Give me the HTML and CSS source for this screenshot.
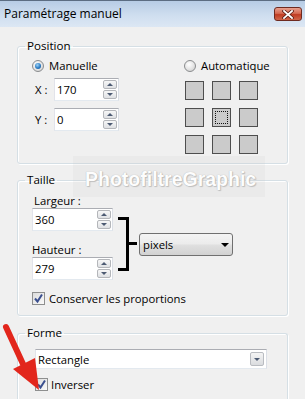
FILE: index.html
```html
<!DOCTYPE html>
<html lang="fr">
<head>
<meta charset="utf-8">
<title>Paramétrage manuel</title>
<link rel="stylesheet" href="styles.css">
</head>
<body>
<div class="titlebar">
  <span class="title">Paramétrage manuel</span>
  <span class="close">
    <svg width="12" height="9" viewBox="0 0 12 9"><path d="M2 1 L10 8 M10 1 L2 8" stroke="#5a1d14" stroke-width="3.4" stroke-linecap="square"/><path d="M2 1 L10 8 M10 1 L2 8" stroke="#fff" stroke-width="1.8" stroke-linecap="square"/></svg>
  </span>
</div>
<div class="content">
  <fieldset class="group group-pos">
    <legend>Position</legend>
    <div class="pos-body">
      <div class="pos-left">
        <div class="option-row"><span class="radio radio-on"><span class="dot"></span></span><span>Manuelle</span></div>
        <div class="axis-row">
          <span class="axis">X :</span>
          <div class="spin-input spin-xy"><span class="val">170</span><span class="spins"><span class="sb sb-up"></span><span class="sb sb-down"></span></span></div>
        </div>
        <div class="axis-row axis-row-y">
          <span class="axis">Y :</span>
          <div class="spin-input spin-xy"><span class="val">0</span><span class="spins"><span class="sb sb-up"></span><span class="sb sb-down"></span></span></div>
        </div>
      </div>
      <div class="pos-right">
        <div class="option-row"><span class="radio"></span><span>Automatique</span></div>
        <div class="anchor-grid">
          <span class="cell"></span><span class="cell"></span><span class="cell"></span>
          <span class="cell"></span><span class="cell cell-sel"><span class="focus"></span></span><span class="cell"></span>
          <span class="cell"></span><span class="cell"></span><span class="cell"></span>
        </div>
      </div>
    </div>
  </fieldset>

  <fieldset class="group group-size">
    <legend>Taille</legend>
    <div class="size-body">
      <div class="size-fields">
        <div class="size-label size-label-w">Largeur :</div>
        <div class="spin-input spin-size"><span class="val">360</span><span class="spins"><span class="sb sb-up"></span><span class="sb sb-down"></span></span></div>
        <div class="size-label size-label-h">Hauteur :</div>
        <div class="spin-input spin-size"><span class="val">279</span><span class="spins"><span class="sb sb-up"></span><span class="sb sb-down"></span></span></div>
      </div>
      <svg class="bracket" width="20" height="54" viewBox="0 0 20 54"><path d="M0 1.5 H9.5 V52.5 H0 M9.5 26.5 H19" fill="none" stroke="#000" stroke-width="3"/></svg>
      <div class="unit-select"><span>pixels</span><span class="caret"></span></div>
    </div>
    <div class="check-row check-keep"><span class="checkbox"><svg width="11" height="11" viewBox="0 0 11 11"><path d="M2 5.5 L4.5 8.5 L9 1.5" fill="none" stroke="#3a4f8f" stroke-width="2"/></svg></span><span>Conserver les proportions</span></div>
  </fieldset>

  <fieldset class="group group-shape">
    <legend>Forme</legend>
    <div class="combo"><span>Rectangle</span><span class="combo-btn"><span class="combo-caret"></span></span></div>
    <div class="check-row check-inv"><span class="checkbox"><svg width="11" height="11" viewBox="0 0 11 11"><path d="M2 5.5 L4.5 8.5 L9 1.5" fill="none" stroke="#3a4f8f" stroke-width="2"/></svg></span><span>Inverser</span></div>
  </fieldset>
</div>

<div class="watermark">PhotofiltreGraphic</div>
<svg class="red-arrow" width="50" height="76" viewBox="0 0 50 76"><path d="M6 5 L23 42" stroke="#e2261c" stroke-width="6" stroke-linecap="round"/><polygon points="13,47 35,36 39,68" fill="#e2261c"/></svg>
</body>
</html>
```
FILE: styles.css
```css
* { box-sizing: border-box; }
html, body { margin: 0; padding: 0; }
body {
  width: 305px;
  height: 399px;
  overflow: hidden;
  position: relative;
  background: #f0f0f0;
  font-family: "Open Sans", "Noto Sans", sans-serif;
  font-size: 11.3px;
  color: #000;
}

.titlebar {
  height: 27px;
  display: flex;
  justify-content: space-between;
  align-items: flex-start;
  padding: 0 3px 0 4px;
  border-top: 1px solid #5c6d82;
  background: linear-gradient(#b7cce5, #cfdeef 55%, #dce7f4);
}
.title { font-size: 12px; line-height: 16px; margin-top: 5px; color: #000; }
.close {
  margin-top: 6px;
  width: 28px;
  height: 14px;
  border: 1px solid #6e2a20;
  border-radius: 3px;
  background: linear-gradient(#e8a08f, #d56a52 45%, #c03c22 55%, #d0664a);
  display: flex;
  align-items: center;
  justify-content: center;
}

.content { padding: 11px 17px 0 17px; }

.group {
  margin: 0;
  padding: 0;
  min-width: 0;
  border: 1px solid #d5dfe5;
  border-radius: 3px;
  box-shadow: inset 1px 1px 0 #fff, 1px 1px 0 #fff;
}
.group legend {
  margin-left: 7px;
  padding: 0 2px;
  line-height: 16px;
  font-size: 11.6px;
}
.group-size { margin-top: 8px; }
.group-shape {
  margin-top: 9px;
  padding-bottom: 7px;
  border-bottom-width: 0;
  border-bottom-left-radius: 0;
  border-bottom-right-radius: 0;
}

/* Position */
.pos-body {
  display: grid;
  grid-template-columns: 151px auto;
  padding: 4px 0 9px 14px;
}
.option-row {
  display: flex;
  align-items: center;
  gap: 5px;
  height: 16px;
  line-height: 16px;
}
.radio {
  width: 12px;
  height: 12px;
  border-radius: 50%;
  border: 1px solid #8a8c8e;
  background: radial-gradient(circle at 40% 35%, #ffffff 0%, #e6e6e6 50%, #c9c9c9 100%);
  display: flex;
  align-items: center;
  justify-content: center;
}
.radio-on .dot {
  width: 6px;
  height: 6px;
  border-radius: 50%;
  background: radial-gradient(circle at 40% 35%, #9fd3f5, #2a7bc4 55%, #164d86);
}
.pos-right .option-row { margin-left: 1px; }

.axis-row { display: flex; align-items: center; margin-top: 4px; }
.axis-row-y { margin-top: 7px; }
.axis { width: 22px; padding-left: 3px; }

.spin-input {
  display: flex;
  align-items: center;
  justify-content: space-between;
  height: 23px;
  background: #fff;
  border: 1px solid;
  border-color: #abadb3 #dbdfe6 #e3e9ef #e2e3ea;
  padding: 0 1px 0 2px;
}
.spin-xy { width: 65px; }
.spin-size { width: 81px; }
.spins { display: flex; flex-direction: column; gap: 1px; }
.sb {
  width: 14px;
  height: 9px;
  border: 1px solid #b4b6ba;
  border-radius: 2px;
  background: linear-gradient(#f7f7f7, #dfe1e4);
  display: flex;
  align-items: center;
  justify-content: center;
}
.sb::after {
  content: "";
  border-left: 3px solid transparent;
  border-right: 3px solid transparent;
}
.sb-up::after { border-bottom: 3px solid #4c5a72; }
.sb-down::after { border-top: 3px solid #4c5a72; }

.anchor-grid {
  margin-top: 7px;
  margin-left: 2px;
  display: grid;
  grid-template-columns: repeat(3, 19px);
  grid-auto-rows: 19px;
  gap: 8px;
}
.cell {
  background: #cbcbcb;
  border: 1px solid #4e4e4e;
  display: flex;
  align-items: center;
  justify-content: center;
}
.cell-sel .focus {
  width: 13px;
  height: 13px;
  border: 1px dotted #111;
}

/* Taille */
.size-body {
  display: flex;
  align-items: flex-start;
  padding-left: 14px;
}
.size-fields { width: 81px; }
.size-label { height: 14px; line-height: 14px; }
.size-label-w { margin-top: 6px; padding-left: 2px; }
.size-label-h { margin-top: 12px; }
.bracket { margin-left: 5px; margin-top: 29px; }
.unit-select {
  margin-left: 1px;
  margin-top: 45px;
  width: 94px;
  height: 23px;
  border: 1px solid #707070;
  border-radius: 3px;
  background: linear-gradient(#f4f4f4, #ececec 45%, #dfdfdf 55%, #d2d2d2);
  display: flex;
  align-items: center;
  justify-content: space-between;
  padding: 0 3px 0 3px;
}
.caret {
  border-left: 4px solid transparent;
  border-right: 4px solid transparent;
  border-top: 4px solid #000;
}

.check-row {
  display: flex;
  align-items: center;
  gap: 4px;
  height: 16px;
}
.check-keep { margin: 10px 0 9px 14px; }
.check-inv { margin: 7px 0 0 17px; gap: 3px; }
.checkbox {
  width: 13px;
  height: 13px;
  border: 1px solid #8e8f8f;
  background: linear-gradient(135deg, #dcdcdc, #fafafa);
  display: flex;
  align-items: center;
  justify-content: center;
}

/* Forme */
.combo {
  margin: 8px 0 0 17px;
  width: 232px;
  height: 20px;
  background: #fff;
  border: 1px solid;
  border-color: #abadb3 #dbdfe6 #e3e9ef #e2e3ea;
  display: flex;
  align-items: center;
  justify-content: space-between;
  padding: 0 2px 0 2px;
}
.combo-btn {
  width: 14px;
  height: 14px;
  border: 1px solid #b9bcc1;
  border-radius: 2px;
  background: linear-gradient(#f4f4f4, #dadcdf);
  display: flex;
  align-items: center;
  justify-content: center;
}
.combo-caret {
  border-left: 3px solid transparent;
  border-right: 3px solid transparent;
  border-top: 3px solid #4c5a72;
}

/* overlays */
.watermark {
  position: absolute;
  left: 73px;
  top: 156px;
  width: 192px;
  height: 41px;
  background: rgba(200, 200, 200, 0.14);
  color: #fdfdfd;
  font-family: "Liberation Sans", Arial, sans-serif;
  font-weight: bold;
  font-size: 19.5px;
  line-height: 41px;
  padding-left: 12px;
  padding-top: 3px;
  text-shadow: 0 0 1px #a8a8a8, 1px 1px 1px #c0c0c0;
}
.red-arrow {
  position: absolute;
  left: 0;
  top: 322px;
}
```
